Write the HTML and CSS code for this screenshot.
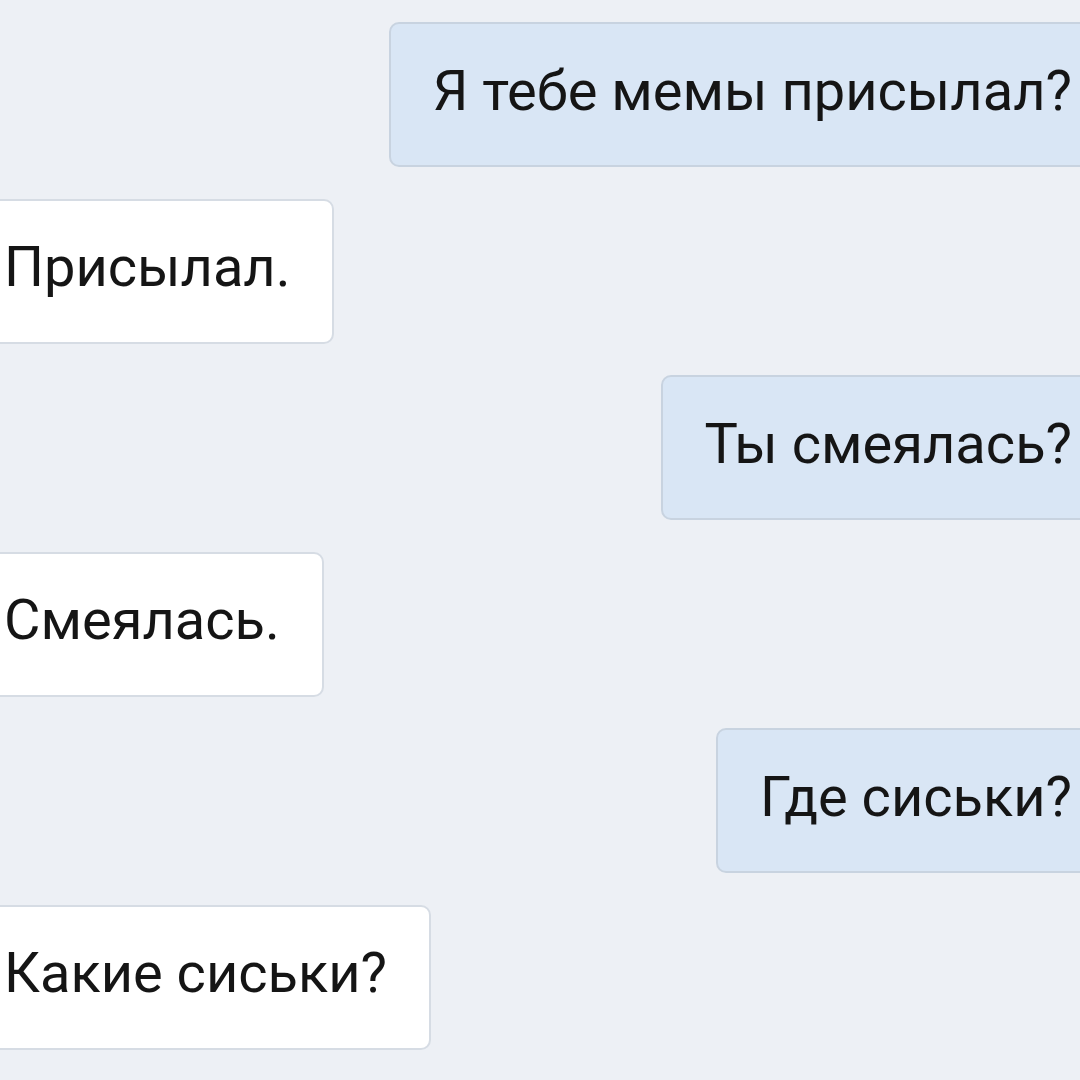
FILE: index.html
```html
<!DOCTYPE html>
<html lang="ru">
<head>
<meta charset="UTF-8">
<title>Чат</title>
<link rel="stylesheet" href="styles.css">
</head>
<body>
  <div class="chat">
    <div class="msg out">Я тебе мемы присылал?</div>
    <div class="msg in">Присылал.</div>
    <div class="msg out">Ты смеялась?</div>
    <div class="msg in">Смеялась.</div>
    <div class="msg out">Где сиськи?</div>
    <div class="msg in">Какие сиськи?</div>
  </div>
</body>
</html>
```

FILE: styles.css
```css
html, body { margin: 0; height: 100%; }
body { background: #edf0f5; color: #151515; font-family: Roboto, 'Liberation Sans', Arial, sans-serif; overflow: hidden; }

.chat { display: flex; flex-direction: column; gap: 31.5px; padding-top: 22px; }

.msg { box-sizing: border-box; height: 145px; display: flex; align-items: center; font-size: 56px; line-height: 1; border-radius: 10px; border: 2px solid #d6dce4; padding-bottom: 8px; }
.msg.out { align-self: flex-end; background: #d9e6f5; border-color: #c8d3e0; margin-right: -40px; padding-left: 42px; padding-right: 46px; }
.msg.in { align-self: flex-start; background: #fff; margin-left: -40px; padding-left: 42px; padding-right: 42px; }
```
